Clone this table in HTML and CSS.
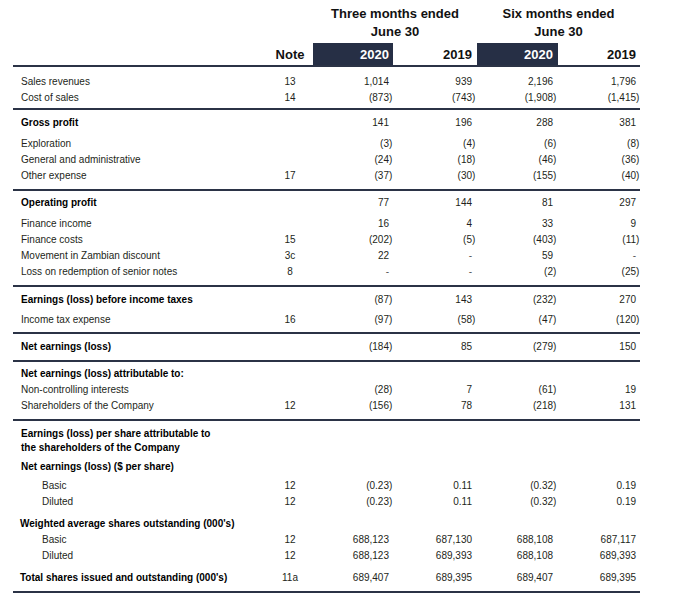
FILE: index.html
```html
<!DOCTYPE html>
<html lang="en">
<head>
<meta charset="utf-8">
<title>Consolidated statement of earnings</title>
<link rel="stylesheet" href="styles.css">
</head>
<body>
<div class="page">
<table class="fs">
  <colgroup>
    <col class="c-label"><col class="c-note"><col class="c-a"><col class="c-b"><col class="c-c"><col class="c-d">
  </colgroup>
  <thead>
    <tr class="h1">
      <th></th><th></th>
      <th colspan="2" class="period">Three months ended</th>
      <th colspan="2" class="period">Six months ended</th>
    </tr>
    <tr class="h2">
      <th></th><th></th>
      <th colspan="2" class="period">June 30</th>
      <th colspan="2" class="period">June 30</th>
    </tr>
    <tr class="h3">
      <th></th>
      <th class="note">Note</th>
      <th class="yr a box">2020</th>
      <th class="yr b">2019</th>
      <th class="yr c box">2020</th>
      <th class="yr d">2019</th>
    </tr>
  </thead>
  <tbody>
    <tr class="pt7">
      <td class="lbl">Sales revenues</td><td class="note">13</td>
      <td class="n a">1,014</td><td class="n b">939</td><td class="n c">2,196</td><td class="n d">1,796</td>
    </tr>
    <tr class="rule pb2">
      <td class="lbl">Cost of sales</td><td class="note">14</td>
      <td class="n a"><span class="neg">(873)</span></td><td class="n b"><span class="neg">(743)</span></td><td class="n c"><span class="neg">(1,908)</span></td><td class="n d"><span class="neg">(1,415)</span></td>
    </tr>
    <tr class="pt5">
      <td class="lbl strong">Gross profit</td><td class="note"></td>
      <td class="n a">141</td><td class="n b">196</td><td class="n c">288</td><td class="n d">381</td>
    </tr>
    <tr class="pt5">
      <td class="lbl">Exploration</td><td class="note"></td>
      <td class="n a"><span class="neg">(3)</span></td><td class="n b"><span class="neg">(4)</span></td><td class="n c"><span class="neg">(6)</span></td><td class="n d"><span class="neg">(8)</span></td>
    </tr>
    <tr>
      <td class="lbl">General and administrative</td><td class="note"></td>
      <td class="n a"><span class="neg">(24)</span></td><td class="n b"><span class="neg">(18)</span></td><td class="n c"><span class="neg">(46)</span></td><td class="n d"><span class="neg">(36)</span></td>
    </tr>
    <tr class="rule pb5">
      <td class="lbl">Other expense</td><td class="note">17</td>
      <td class="n a"><span class="neg">(37)</span></td><td class="n b"><span class="neg">(30)</span></td><td class="n c"><span class="neg">(155)</span></td><td class="n d"><span class="neg">(40)</span></td>
    </tr>
    <tr class="pt4">
      <td class="lbl strong">Operating profit</td><td class="note"></td>
      <td class="n a">77</td><td class="n b">144</td><td class="n c">81</td><td class="n d">297</td>
    </tr>
    <tr class="pt5">
      <td class="lbl">Finance income</td><td class="note"></td>
      <td class="n a">16</td><td class="n b">4</td><td class="n c">33</td><td class="n d">9</td>
    </tr>
    <tr>
      <td class="lbl">Finance costs</td><td class="note">15</td>
      <td class="n a"><span class="neg">(202)</span></td><td class="n b"><span class="neg">(5)</span></td><td class="n c"><span class="neg">(403)</span></td><td class="n d"><span class="neg">(11)</span></td>
    </tr>
    <tr>
      <td class="lbl">Movement in Zambian discount</td><td class="note">3c</td>
      <td class="n a">22</td><td class="n b dash">-</td><td class="n c">59</td><td class="n d dash">-</td>
    </tr>
    <tr class="rule pb5">
      <td class="lbl">Loss on redemption of senior notes</td><td class="note">8</td>
      <td class="n a dash">-</td><td class="n b dash">-</td><td class="n c"><span class="neg">(2)</span></td><td class="n d"><span class="neg">(25)</span></td>
    </tr>
    <tr class="pt5">
      <td class="lbl strong">Earnings (loss) before income taxes</td><td class="note"></td>
      <td class="n a"><span class="neg">(87)</span></td><td class="n b">143</td><td class="n c"><span class="neg">(232)</span></td><td class="n d">270</td>
    </tr>
    <tr class="pt4 rule pb4">
      <td class="lbl">Income tax expense</td><td class="note">16</td>
      <td class="n a"><span class="neg">(97)</span></td><td class="n b"><span class="neg">(58)</span></td><td class="n c"><span class="neg">(47)</span></td><td class="n d"><span class="neg">(120)</span></td>
    </tr>
    <tr class="pt5 rule pb5">
      <td class="lbl strong">Net earnings (loss)</td><td class="note"></td>
      <td class="n a"><span class="neg">(184)</span></td><td class="n b">85</td><td class="n c"><span class="neg">(279)</span></td><td class="n d">150</td>
    </tr>
    <tr class="pt4">
      <td class="lbl strong" colspan="6">Net earnings (loss) attributable to:</td>
    </tr>
    <tr>
      <td class="lbl">Non-controlling interests</td><td class="note"></td>
      <td class="n a"><span class="neg">(28)</span></td><td class="n b">7</td><td class="n c"><span class="neg">(61)</span></td><td class="n d">19</td>
    </tr>
    <tr class="rule pb5">
      <td class="lbl">Shareholders of the Company</td><td class="note">12</td>
      <td class="n a"><span class="neg">(156)</span></td><td class="n b">78</td><td class="n c"><span class="neg">(218)</span></td><td class="n d">131</td>
    </tr>
    <tr class="pt6">
      <td class="lbl strong two" colspan="6">Earnings (loss) per share attributable to<br>the shareholders of the Company</td>
    </tr>
    <tr class="pt4">
      <td class="lbl strong" colspan="6">Net earnings (loss) ($ per share)</td>
    </tr>
    <tr class="pt3">
      <td class="lbl ind">Basic</td><td class="note">12</td>
      <td class="n a"><span class="neg">(0.23)</span></td><td class="n b">0.11</td><td class="n c"><span class="neg">(0.32)</span></td><td class="n d">0.19</td>
    </tr>
    <tr>
      <td class="lbl ind">Diluted</td><td class="note">12</td>
      <td class="n a"><span class="neg">(0.23)</span></td><td class="n b">0.11</td><td class="n c"><span class="neg">(0.32)</span></td><td class="n d">0.19</td>
    </tr>
    <tr class="pt6">
      <td class="lbl strong tight" colspan="6">Weighted average shares outstanding (000's)</td>
    </tr>
    <tr>
      <td class="lbl ind">Basic</td><td class="note">12</td>
      <td class="n a">688,123</td><td class="n b">687,130</td><td class="n c">688,108</td><td class="n d">687,117</td>
    </tr>
    <tr>
      <td class="lbl ind">Diluted</td><td class="note">12</td>
      <td class="n a">688,123</td><td class="n b">689,393</td><td class="n c">688,108</td><td class="n d">689,393</td>
    </tr>
    <tr class="pt6 rule pb5">
      <td class="lbl strong tight">Total shares issued and outstanding (000's)</td><td class="note">11a</td>
      <td class="n a">689,407</td><td class="n b">689,395</td><td class="n c">689,407</td><td class="n d">689,395</td>
    </tr>
  </tbody>
</table>
</div>
</body>
</html>
```

FILE: styles.css
```css
html, body {
  margin: 0;
  background: #ffffff;
}

body {
  font-family: "Liberation Sans", Arial, sans-serif;
  color: #231f20;
}

.page {
  padding: 5px 0 0 13px;
}

.fs {
  border-collapse: separate;
  border-spacing: 0;
  table-layout: fixed;
  width: 627px;
}

.c-label { width: 257px; }
.c-note  { width: 43px; }
.c-a     { width: 80px; }
.c-b     { width: 84px; }
.c-c     { width: 81px; }
.c-d     { width: 82px; }

.fs th,
.fs td {
  padding: 0;
  white-space: nowrap;
  font-size: 10px;
  line-height: 16px;
  vertical-align: middle;
}

/* ---------- header ---------- */
.fs thead th {
  font-size: 13px;
  font-weight: bold;
  color: #111;
}

.h1 th,
.h2 th {
  line-height: 18px;
  text-align: center;
}

.h3 th {
  line-height: 20px;
  padding-top: 2px;
  border-top: 2px solid transparent;
  border-bottom: 2px solid #2b3346;
  background-clip: padding-box;
}

.h3 .note {
  text-align: center;
  padding-right: 3px;
}

.yr {
  text-align: right;
}

.box {
  background-color: #262f45;
  color: #ffffff !important;
}

/* ---------- body ---------- */
.lbl {
  text-align: left;
  padding-left: 8px !important;
}

.lbl.ind {
  padding-left: 29px !important;
}

.lbl.tight {
  padding-left: 7px !important;
}

.strong {
  font-weight: bold;
  color: #000;
}

.lbl.two {
  line-height: 14px;
}

td.note {
  text-align: center;
  padding-right: 3px;
}

.n {
  text-align: right;
}

.a { padding-right: 4px !important; }
.b { padding-right: 5px !important; }
.c { padding-right: 5px !important; }
.d { padding-right: 4px !important; }

.neg {
  margin-right: -0.333em;
}

.dash {
  color: #555;
}

/* vertical rhythm */
.pt2 td { padding-top: 2px; }
.pt3 td { padding-top: 3px; }
.pt4 td { padding-top: 4px; }
.pt5 td { padding-top: 5px; }
.pt6 td { padding-top: 6px; }
.pt7 td { padding-top: 7px; }

.pb2 td { padding-bottom: 2px; }
.pb4 td { padding-bottom: 4px; }
.pb5 td { padding-bottom: 5px; }

.rule td {
  border-bottom: 2px solid #2b3346;
}
```
